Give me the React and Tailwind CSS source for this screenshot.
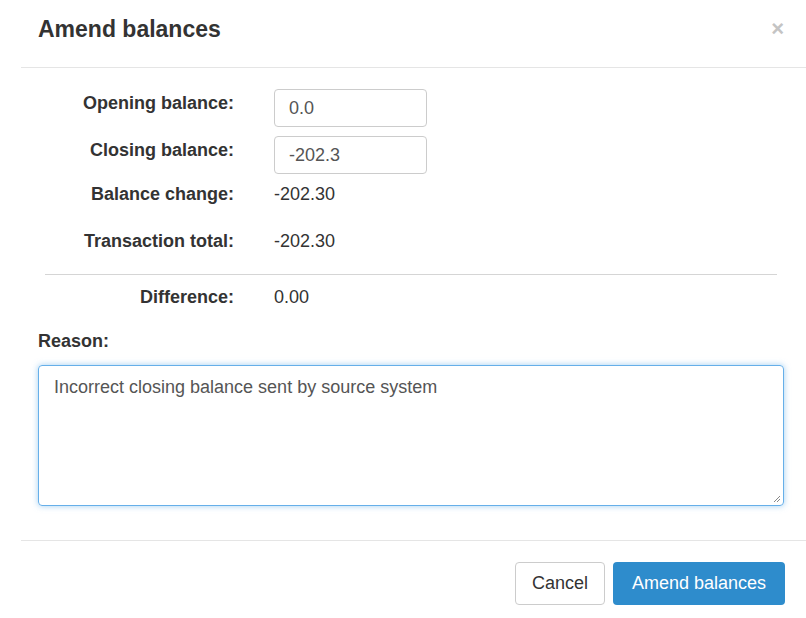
export default function App() {
  const rows = [
    ["Opening balance:", "0.0", true, "h-[38px] mb-[9px]"],
    ["Closing balance:", "-202.3", true, "h-[38px]"],
  ];
  return (
    <div className="w-[806px] h-[618px] bg-white text-[#333] overflow-hidden" style={{ fontFamily: '"Liberation Sans", Arial, sans-serif' }}>
      <div className="ml-[21px] h-[68px] border-b border-[#e5e5e5] flex items-center justify-between pl-[17px] pr-[22px]">
        <h1 className="text-[23px] font-bold text-[#333] -mt-[8px]">Amend balances</h1>
        <span className="text-[22px] font-bold text-[#c4c4c4] -mt-[10px]">×</span>
      </div>
      <div className="pt-[21px]">
        {rows.map(([l, v, , c], i) => (
          <div key={i} className={`flex items-start ${c}`}>
            <div className="w-[234px] text-right text-[18px] font-bold pt-[1px]">{l}</div>
            <div className="ml-[40px] w-[153px] h-[38px] border border-[#ccc] rounded-[4px] px-[14px] flex items-center text-[18px] text-[#555]">{v}</div>
          </div>
        ))}
        <div className="flex items-center mt-[8px] h-[24px]">
          <div className="w-[234px] text-right text-[18px] font-bold">Balance change:</div>
          <div className="ml-[40px] text-[18px]">-202.30</div>
        </div>
        <div className="flex items-center mt-[23px] h-[24px]">
          <div className="w-[234px] text-right text-[18px] font-bold">Transaction total:</div>
          <div className="ml-[40px] text-[18px]">-202.30</div>
        </div>
        <div className="ml-[45px] w-[732px] border-t border-[#d5d5d5] mt-[21px]"></div>
        <div className="flex items-center mt-[10px] h-[24px]">
          <div className="w-[234px] text-right text-[18px] font-bold">Difference:</div>
          <div className="ml-[40px] text-[18px]">0.00</div>
        </div>
        <div className="ml-[38px] mt-[20px] text-[18px] font-bold h-[24px] flex items-center">Reason:</div>
        <div className="ml-[38px] mt-[12px] w-[746px] h-[141px] border border-[#66afe9] rounded-[4px] shadow-[0_0_6px_rgba(102,175,233,0.6)] px-[15px] pt-[8px] text-[18px] text-[#555] relative">
          Incorrect closing balance sent by source system
          <svg className="absolute right-[2px] bottom-[2px]" width="9" height="9" viewBox="0 0 9 9"><path d="M8 2L2 8M8 5L5 8" stroke="#888" strokeWidth="1" /></svg>
        </div>
        <div className="ml-[21px] border-t border-[#e5e5e5] mt-[34px]"></div>
        <div className="flex justify-end gap-[8px] pr-[21px] mt-[21px]">
          <button className="w-[90px] h-[43px] border border-[#ccc] rounded-[4px] bg-white text-[18px] text-[#333]">Cancel</button>
          <button className="w-[172px] h-[43px] rounded-[4px] bg-[#2e8ccc] text-white text-[18px]">Amend balances</button>
        </div>
      </div>
    </div>
  );
}
